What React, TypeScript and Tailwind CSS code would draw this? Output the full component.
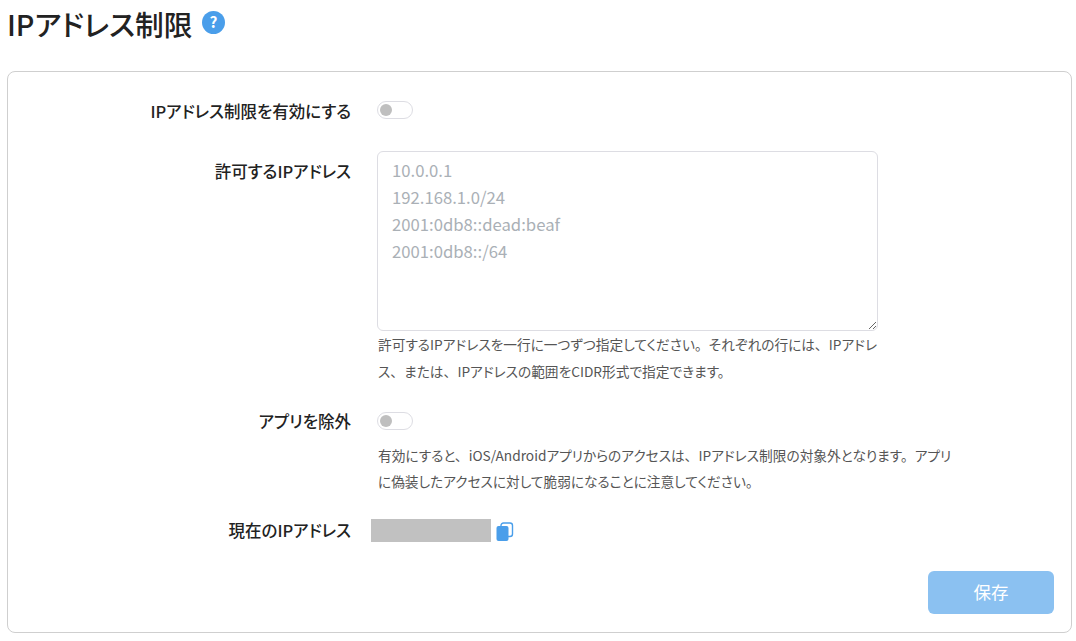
const font = "font-['Noto_Sans_CJK_JP',sans-serif] [font-feature-settings:'palt']"

function Toggle() {
  return (
    <div className="w-[36px] h-[18px] rounded-full border border-[#dddde3] bg-white flex items-center pl-[2px]">
      <div className="w-[12px] h-[12px] rounded-full bg-[#bfbfbf]" />
    </div>
  )
}

function Label({ children }: { children: string }) {
  return <div className="w-[343px] shrink-0 text-right text-[16.5px] leading-[24px] font-medium text-[#222]">{children}</div>
}

// punctuation keeps close to full width in the original
function Mark({ children }: { children: string }) {
  return <span className="mr-[7px]">{children}</span>
}

export default function App() {
  return (
    <div className={`${font} w-[1076px] h-[641px] overflow-hidden bg-white pl-[7px] pr-[4px] text-[#222]`}>
      <div className="h-[71px] flex items-start pt-[3px]">
        <h1 className="text-[28.7px] leading-[42px] font-medium text-[#222]">IPアドレス制限</h1>
        <svg className="ml-[10px] mt-[8px]" width="23" height="23" viewBox="0 0 24 24">
          <circle cx="12" cy="12" r="12" fill="#4a9eea" />
          <text x="12" y="17.5" textAnchor="middle" fontSize="16" fontWeight="700" fill="#fff">?</text>
        </svg>
      </div>
      <div className="h-[562px] rounded-[8px] border border-[#cfcfcf] pt-[28px] pr-[17px] flex flex-col">
        <div className="flex items-center h-[22px]">
          <Label>IPアドレス制限を有効にする</Label>
          <div className="ml-[26px] -mt-[2px]"><Toggle /></div>
        </div>
        <div className="flex mt-[29px]">
          <div className="pt-[8px]"><Label>許可するIPアドレス</Label></div>
          <div className="ml-[26px] w-[501px]">
            <textarea
              readOnly
              className="block w-full h-[180px] rounded-[6px] border border-[#dddde3] px-[14px] py-[5px] text-[16.7px] leading-[27px] text-[#222] placeholder:text-[#aab0b6] outline-none"
              placeholder={"10.0.0.1\n192.168.1.0/24\n2001:0db8::dead:beaf\n2001:0db8::/64"}
            />
            <p className="pl-[1px] text-[13.7px] leading-[27px] text-[#555] whitespace-nowrap">
              許可するIPアドレスを一行に一つずつ指定してください<Mark>。</Mark>それぞれの行には<Mark>、</Mark>IPアドレ<br />
              ス<Mark>、</Mark>または<Mark>、</Mark>IPアドレスの範囲をCIDR形式で指定できます。
            </p>
          </div>
        </div>
        <div className="flex items-center h-[24px] mt-[24px]">
          <Label>アプリを除外</Label>
          <div className="ml-[26px]"><Toggle /></div>
        </div>
        <div className="ml-[370px] w-[580px] mt-[9px] text-[13.7px] leading-[26px] text-[#555] whitespace-nowrap">
          有効にすると<Mark>、</Mark>iOS/Androidアプリからのアクセスは<Mark>、</Mark>IPアドレス制限の対象外となります<Mark>。</Mark>アプリ<br />
          に偽装したアクセスに対して脆弱になることに注意してください。
        </div>
        <div className="flex items-center h-[24px] mt-[24px]">
          <Label>現在のIPアドレス</Label>
          <div className="ml-[20px] w-[120px] h-[23px] bg-[#c1c1c1]" />
          <svg className="ml-[5px] mt-[2px]" width="18" height="19" viewBox="0 0 18 19">
            <rect x="5" y="1" width="11.5" height="13.5" rx="2.5" fill="#fff" stroke="#4a9eea" strokeWidth="1.4" />
            <rect x="0.5" y="4" width="12" height="15" rx="2" fill="#4a9eea" />
          </svg>
        </div>
        <div className="flex justify-end mt-[29px]">
          <button className="w-[126px] h-[43px] rounded-[6px] bg-[#8bc1f1] text-white text-[17.5px]">保存</button>
        </div>
      </div>
    </div>
  )
}
